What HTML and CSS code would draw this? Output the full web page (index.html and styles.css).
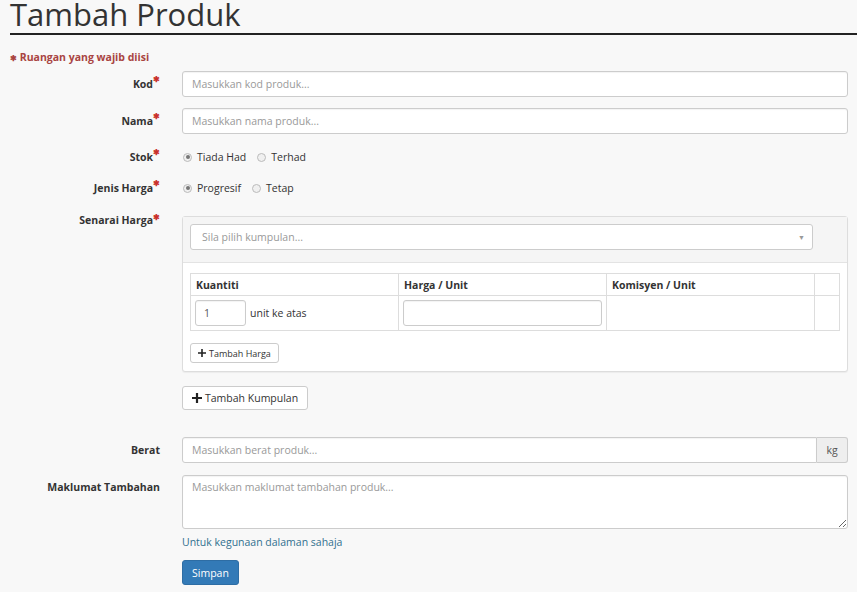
FILE: index.html
```html
<!DOCTYPE html>
<html>
<head>
<meta charset="utf-8">
<link rel="stylesheet" href="styles.css">
</head>
<body>
<div class="page">
  <h1 class="title">Tambah Produk</h1>
  <p class="required-note"><span class="star">&#10033;</span> Ruangan yang wajib diisi</p>
  <form class="form">
    <div class="row row-input">
      <label class="label">Kod<sup>&#10033;</sup></label>
      <input class="control" type="text" placeholder="Masukkan kod produk...">
    </div>
    <div class="row row-input">
      <label class="label">Nama<sup>&#10033;</sup></label>
      <input class="control" type="text" placeholder="Masukkan nama produk...">
    </div>
    <div class="row row-radio row-stok">
      <label class="label">Stok<sup>&#10033;</sup></label>
      <div class="radios">
        <label class="radio"><input type="radio" name="stok" checked> Tiada Had</label>
        <label class="radio"><input type="radio" name="stok"> Terhad</label>
      </div>
    </div>
    <div class="row row-radio">
      <label class="label">Jenis Harga<sup>&#10033;</sup></label>
      <div class="radios">
        <label class="radio"><input type="radio" name="jenis" checked> Progresif</label>
        <label class="radio"><input type="radio" name="jenis"> Tetap</label>
      </div>
    </div>
    <div class="row row-panel">
      <label class="label label-top">Senarai Harga<sup>&#10033;</sup></label>
      <div>
        <div class="panel">
          <div class="panel-head">
            <div class="select">
              <span class="select-ph">Sila pilih kumpulan...</span>
              <span class="select-arrow">&#9660;</span>
            </div>
          </div>
          <div class="panel-body">
            <table class="price-table">
              <thead>
                <tr><th class="c1">Kuantiti</th><th class="c2">Harga / Unit</th><th class="c3">Komisyen / Unit</th><th class="c4"></th></tr>
              </thead>
              <tbody>
                <tr>
                  <td><div class="qty"><input class="control qty-input" type="text" value="1"><span>unit ke atas</span></div></td>
                  <td><input class="control" type="text"></td>
                  <td></td>
                  <td></td>
                </tr>
              </tbody>
            </table>
            <button type="button" class="btn btn-xs"><svg class="plus" viewBox="0 0 10 10" width="8" height="8"><path d="M4 0h2v4h4v2H6v4H4V6H0V4h4z"/></svg>Tambah Harga</button>
          </div>
        </div>
        <button type="button" class="btn btn-sm"><svg class="plus" viewBox="0 0 10 10" width="10" height="10"><path d="M3.9 0h2.2v3.9H10v2.2H6.1V10H3.9V6.1H0V3.9h3.9z"/></svg>Tambah Kumpulan</button>
      </div>
    </div>
    <div class="row row-input row-berat">
      <label class="label label-plain">Berat</label>
      <div class="group">
        <input class="control group-input" type="text" placeholder="Masukkan berat produk...">
        <span class="addon">kg</span>
      </div>
    </div>
    <div class="row row-text">
      <label class="label label-plain label-top2">Maklumat Tambahan</label>
      <div>
        <textarea class="control textarea" placeholder="Masukkan maklumat tambahan produk..."></textarea>
        <p class="help">Untuk kegunaan dalaman sahaja</p>
        <button type="button" class="btn btn-primary">Simpan</button>
      </div>
    </div>
  </form>
</div>
</body>
</html>
```
FILE: styles.css
```css
* { box-sizing: border-box; }
html, body { margin: 0; padding: 0; }
body {
  background: #f8f8f8;
  font-family: "Open Sans", "Liberation Sans", sans-serif;
  color: #333;
  font-size: 10.5px;
}
.page { padding-left: 10px; }
.title {
  margin: 0;
  font-size: 31px;
  font-weight: 400;
  line-height: 28px;
  height: 35px;
  padding-top: 0;
  color: #333;
  border-bottom: 2px solid #222;
}
.required-note {
  margin: 14px 0 0;
  font-size: 10.5px;
  font-weight: 700;
  color: #a94442;
  line-height: 16px;
}
.required-note .star { font-size: 8px; }
.form { margin: 5px 9px 0 0; }
.row {
  display: grid;
  grid-template-columns: 150px 1fr;
  column-gap: 22px;
  align-items: center;
}
.row-input { margin-bottom: 11px; }
.row-stok { margin-top: 13px; }
.row-radio { height: 20px; margin-bottom: 11px; }
.row-panel { align-items: start; margin-top: 18px; margin-bottom: 27px; }
.row-berat { margin-bottom: 12px; }
.row-text { align-items: start; }
.label {
  text-align: right;
  font-weight: 700;
  font-size: 10.5px;
  color: #333;
}
.label sup {
  color: #c9302c;
  font-size: 7.5px;
  vertical-align: top;
  position: relative;
  top: -3px;
}
.label-top { line-height: 16px; margin-top: -4px; }
.label-top2 { padding-top: 5px; }
.control {
  display: block;
  width: 100%;
  height: 26px;
  border: 1px solid #ccc;
  border-radius: 3px;
  background: #fff;
  font-family: "Open Sans", "Liberation Sans", sans-serif;
  font-size: 10.5px;
  padding: 0 9px;
  color: #555;
  box-shadow: inset 0 1px 1px rgba(0,0,0,0.05);
}
.control::placeholder { color: #999; }
.radios { display: flex; gap: 10px; }
.radio { display: flex; align-items: center; gap: 5px; font-size: 10.5px; color: #333; }
.radio input {
  appearance: none;
  -webkit-appearance: none;
  width: 9px;
  height: 9px;
  margin: 0 0 0 1px;
  border: 1px solid #bbb;
  border-radius: 50%;
  background: #f0f0f0;
  position: relative;
}
.radio input:checked::after {
  content: "";
  position: absolute;
  left: 1.5px;
  top: 1.5px;
  width: 4px;
  height: 4px;
  border-radius: 50%;
  background: #777;
}
.panel {
  border: 1px solid #ddd;
  border-radius: 3px;
  background: #fff;
  box-shadow: 0 1px 1px rgba(0,0,0,0.05);
}
.panel-head {
  background: #f5f5f5;
  padding: 7px 34px 12px 7px;
  border-bottom: 1px solid #e3e3e3;
}
.select {
  height: 26px;
  border: 1px solid #ccc;
  border-radius: 3px;
  background: #fff;
  display: flex;
  align-items: center;
  justify-content: space-between;
  padding: 0 7px 0 11px;
}
.select-ph { color: #999; font-size: 10.5px; }
.select-arrow { color: #999; font-size: 7px; }
.panel-body { padding: 10px 7px 8px 7px; }
.price-table {
  width: 100%;
  border-collapse: collapse;
  margin-bottom: 12px;
}
.price-table th, .price-table td {
  border: 1px solid #ddd;
  text-align: left;
  padding: 4px;
}
.price-table th {
  height: 22px;
  font-size: 10.5px;
  font-weight: 700;
  padding: 2px 5px;
}
.price-table td { height: 33px; }
.c1, .c2, .c3 { width: 208px; }
.qty { display: flex; align-items: center; gap: 4px; }
.qty-input { width: 51px; padding: 0 8px; color: #555; }
.qty span { font-size: 10.5px; color: #333; }
.btn {
  display: inline-flex;
  align-items: center;
  border: 1px solid #ccc;
  border-radius: 3px;
  background: #fff;
  color: #333;
  font-family: "Open Sans", "Liberation Sans", sans-serif;
  cursor: pointer;
}
.plus { fill: #222; }
.btn-xs {
  height: 20px;
  padding: 0 7px 0 7px;
  font-size: 9px;
  gap: 3px;
}
.btn-sm {
  margin-top: 14px;
  height: 24px;
  padding: 0 9px 0 9px;
  font-size: 10.5px;
  gap: 3px;
}
.group { display: flex; }
.group-input { flex: 1; border-radius: 3px 0 0 3px; }
.addon {
  width: 31px;
  height: 26px;
  border: 1px solid #ccc;
  border-left: 0;
  border-radius: 0 3px 3px 0;
  background: #eee;
  color: #555;
  font-size: 10.5px;
  display: flex;
  align-items: center;
  justify-content: center;
}
.textarea {
  height: 54px;
  padding: 4px 9px;
  resize: vertical;
}
.help {
  margin: 5px 0 0;
  font-size: 10.5px;
  color: #31708f;
  line-height: 16px;
}
.btn-primary {
  margin-top: 10px;
  height: 25px;
  padding: 0 9px;
  background: #337ab7;
  border-color: #2e6da4;
  color: #fff;
  font-size: 10.5px;
}
```
